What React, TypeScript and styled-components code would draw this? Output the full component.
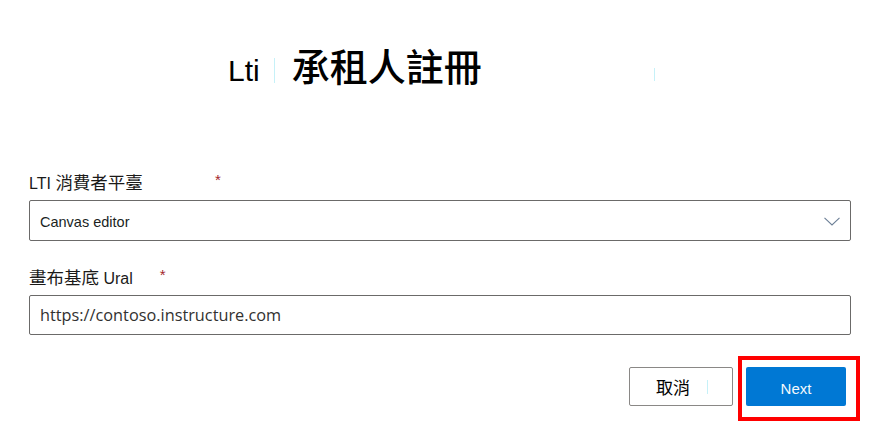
import styled, { createGlobalStyle } from "styled-components";

const GlobalStyle = createGlobalStyle`
    body {
        margin: 0;
        background: #ffffff;
        font-family: "Liberation Sans", "Noto Sans CJK TC", sans-serif;
        color: #000000;
    }
`;

const Page = styled.div`
    width: 880px;
    height: 438px;
    overflow: hidden;
    box-sizing: border-box;
    padding: 0 29px;
`;

const TitleRow = styled.div`
    display: flex;
    align-items: baseline;
    padding-top: 46px;
    padding-left: 199px;
    height: 170px;
    box-sizing: border-box;
`;

const Brand = styled.span`
    font-family: "Liberation Sans", sans-serif;
    font-size: 30px;
`;

const Tick = styled.span<{ $h: number; $drop?: number }>`
    display: inline-block;
    width: 1px;
    height: ${(p) => p.$h}px;
    background: #c6f1f8;
    position: relative;
    top: ${(p) => p.$drop ?? 0}px;
`;

const Title = styled.h1`
    margin: 0 172px 0 17px;
    font-family: "Noto Sans CJK TC", sans-serif;
    font-size: 38px;
    font-weight: 500;
    line-height: 1;
`;

const Field = styled.div<{ $gap: number }>`
    display: flex;
    flex-direction: column;
    margin-bottom: ${(p) => p.$gap}px;
`;

const Label = styled.label`
    display: flex;
    align-items: center;
    height: 22px;
    margin-bottom: 8px;
    font-size: 16px;
    font-family: "Liberation Sans", "Noto Sans CJK TC", sans-serif;
    color: #1b1a19;
    white-space: pre;
`;

const Cjk = styled.span`
    font-family: "Noto Sans CJK TC", sans-serif;
    font-size: 17.5px;
`;

const Required = styled.span<{ $offset: number }>`
    margin-left: ${(p) => p.$offset}px;
    color: #a4262c;
    font-size: 15px;
    position: relative;
    top: -2px;
`;

const SelectBox = styled.div`
    display: flex;
    align-items: center;
    justify-content: space-between;
    height: 41px;
    box-sizing: border-box;
    border: 1px solid #6b6a69;
    border-radius: 2px;
    padding: 2px 10px 0 10px;
    font-family: "Liberation Sans", sans-serif;
    font-size: 14.5px;
    color: #201f1e;
`;

const TextBox = styled.div`
    display: flex;
    align-items: center;
    height: 40px;
    box-sizing: border-box;
    border: 1px solid #6b6a69;
    border-radius: 2px;
    padding: 0 10px;
    font-family: "Open Sans", sans-serif;
    font-size: 16.3px;
    color: #323130;
`;

const Actions = styled.div`
    display: flex;
    justify-content: flex-end;
    align-items: flex-start;
    gap: 5px;
    margin-right: -9px;
`;

const Button = styled.button<{ $primary?: boolean }>`
    width: ${(p) => (p.$primary ? 100 : 104)}px;
    height: 39px;
    border-radius: 2px;
    font-size: ${(p) => (p.$primary ? 15 : 17)}px;
    font-family: ${(p) =>
        p.$primary ? '"Liberation Sans", sans-serif' : '"Noto Sans CJK TC", sans-serif'};
    cursor: pointer;
    display: flex;
    align-items: center;
    justify-content: center;
    gap: 17px;
    ${(p) =>
        p.$primary
            ? `background: #0078d4; color: #f4f8fc; border: none; padding-top: 5px;`
            : `background: #ffffff; color: #000000; border: 1px solid #8a8886; margin-top: 11px; padding-left: 8px;`}
`;

const Highlight = styled.div`
    border: 4px solid #ff0000;
    padding: 7px 10px 11px 4px;
`;

const Chevron = () => (
    <svg width="16" height="9" viewBox="0 0 16 9" fill="none">
        <path d="M0.5 0.8 L8 8 L15.5 0.8" stroke="#6c7f96" strokeWidth="1.1" />
    </svg>
);

export default function App() {
    return (
        <>
            <GlobalStyle />
            <Page>
                <TitleRow>
                    <Brand>Lti</Brand>
                    <Tick $h={25} $drop={2} style={{ marginLeft: 14 }} />
                    <Title>承租人註冊</Title>
                    <Tick $h={13} />
                </TitleRow>

                <Field $gap={24}>
                    <Label>
                        <span>
                            LTI <Cjk>消費者平臺</Cjk>
                        </span>
                        <Required $offset={72}>*</Required>
                    </Label>
                    <SelectBox>
                        <span>Canvas editor</span>
                        <Chevron />
                    </SelectBox>
                </Field>

                <Field $gap={21}>
                    <Label>
                        <span>
                            <Cjk>畫布基底</Cjk> Ural
                        </span>
                        <Required $offset={27}>*</Required>
                    </Label>
                    <TextBox>https://contoso.instructure.com</TextBox>
                </Field>

                <Actions>
                    <Button>
                        取消
                        <Tick $h={14} />
                    </Button>
                    <Highlight>
                        <Button $primary>Next</Button>
                    </Highlight>
                </Actions>
            </Page>
        </>
    );
}
